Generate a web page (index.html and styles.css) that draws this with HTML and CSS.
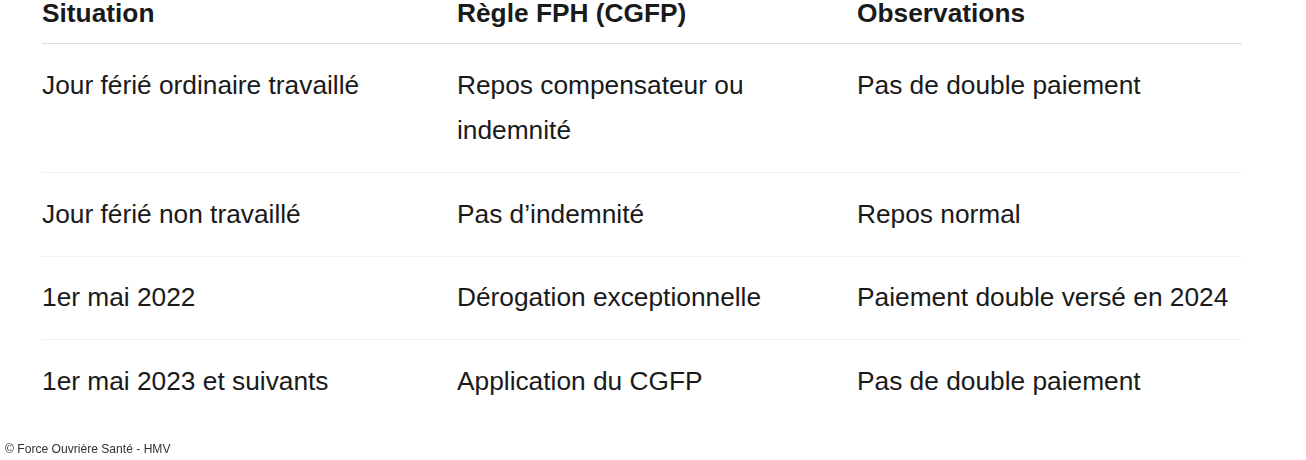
FILE: index.html
```html
<!DOCTYPE html>
<html lang="fr">
<head>
<meta charset="utf-8">
<title>Jours fériés FPH</title>
<link rel="stylesheet" href="styles.css">
</head>
<body>
<table class="rules">
  <colgroup>
    <col class="c1"><col class="c2"><col class="c3">
  </colgroup>
  <thead>
    <tr><th>Situation</th><th>Règle FPH (CGFP)</th><th>Observations</th></tr>
  </thead>
  <tbody>
    <tr><td>Jour férié ordinaire travaillé</td><td>Repos compensateur ou indemnité</td><td>Pas de double paiement</td></tr>
    <tr><td>Jour férié non travaillé</td><td>Pas d’indemnité</td><td>Repos normal</td></tr>
    <tr><td>1er mai 2022</td><td>Dérogation exceptionnelle</td><td>Paiement double versé en 2024</td></tr>
    <tr><td>1er mai 2023 et suivants</td><td>Application du CGFP</td><td>Pas de double paiement</td></tr>
  </tbody>
</table>
<div class="credit">© Force Ouvrière Santé - HMV</div>
</body>
</html>
```

FILE: styles.css
```css
html, body {
  margin: 0;
  padding: 0;
  background: #ffffff;
}
body {
  font-family: "Liberation Sans", Arial, sans-serif;
  color: #1a1a1a;
}
.rules {
  width: 1200px;
  margin: 0 0 0 42px;
  border-collapse: collapse;
  table-layout: fixed;
  font-size: 26.3px;
}
.c1 { width: 415px; }
.c2 { width: 400px; }
.c3 { width: 385px; }
.rules th {
  text-align: left;
  font-weight: bold;
  line-height: 26px;
  padding: 0 0 17px 0;
  border-bottom: 1px solid #dddddd;
  vertical-align: bottom;
}
.rules td {
  line-height: 45.5px;
  padding: 18.75px 6px 18.25px 0;
  vertical-align: top;
  border-bottom: 1px solid #f0f0f0;
}
.rules tbody tr:last-child td {
  border-bottom: none;
}
.credit {
  position: fixed;
  left: 5px;
  bottom: 4px;
  font-size: 12.1px;
  color: #333333;
  font-family: "Liberation Sans", Arial, sans-serif;
}
```
